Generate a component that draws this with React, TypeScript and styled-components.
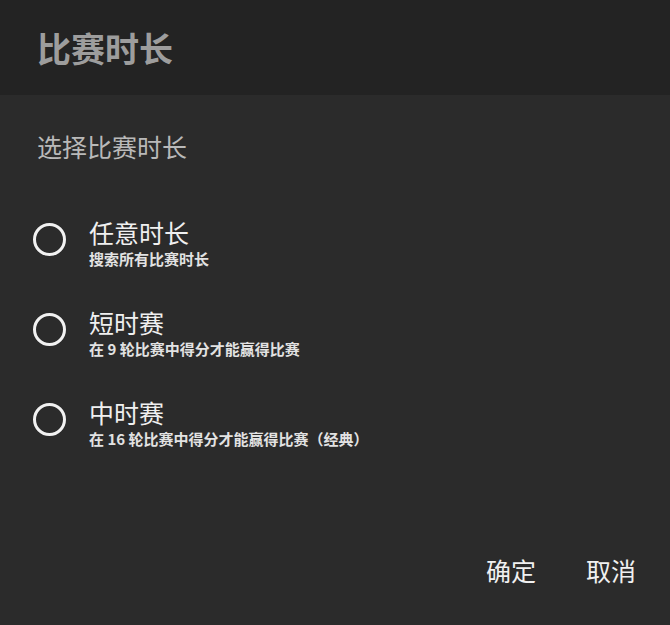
import React from "react";
import styled, { createGlobalStyle } from "styled-components";

const Global = createGlobalStyle`
  html, body { margin: 0; padding: 0; background: #2b2b2b; }
  body { font-family: "Noto Sans CJK SC", "Noto Sans", sans-serif; }
`;

const Dialog = styled.div`
  width: 670px;
  height: 625px;
  display: flex;
  flex-direction: column;
  background: #2b2b2b;
`;

const Header = styled.div`
  height: 95px;
  background: #232323;
  display: flex;
  align-items: center;
  padding-left: 37px;
`;

const Title = styled.h1`
  margin: 0;
  font-size: 34px;
  line-height: 34px;
  font-weight: 700;
  color: #9d9d9d;
`;

const Body = styled.div`
  display: flex;
  flex-direction: column;
  padding: 39px 0 0 37px;
`;

const Subtitle = styled.div`
  font-size: 25px;
  line-height: 25px;
  color: #b9b9b9;
`;

const List = styled.div`
  display: flex;
  flex-direction: column;
  gap: 40px;
  margin-top: 59px;
`;

const Row = styled.div`
  display: flex;
  align-items: flex-start;
  gap: 23px;
`;

const Radio = styled.div`
  width: 33px;
  height: 33px;
  box-sizing: border-box;
  border: 3px solid #f2f2f2;
  border-radius: 50%;
  margin-top: 5px;
  margin-left: -4px;
  flex: none;
`;

const Texts = styled.div`
  display: flex;
  flex-direction: column;
  gap: 4px;
`;

const OptionTitle = styled.div`
  font-size: 25px;
  line-height: 28px;
  color: #f0f0f0;
`;

const OptionSub = styled.div`
  font-size: 15px;
  line-height: 18px;
  font-weight: 700;
  color: #e2e2e2;
`;

const Actions = styled.div`
  display: flex;
  justify-content: flex-end;
  gap: 50px;
  padding-right: 34px;
  margin-top: 110px;
`;

const Action = styled.button`
  background: none;
  border: none;
  padding: 0;
  font-family: inherit;
  font-size: 25px;
  line-height: 25px;
  color: #f0f0f0;
  cursor: pointer;
`;

const options = [
  { title: "任意时长", sub: "搜索所有比赛时长" },
  { title: "短时赛", sub: "在 9 轮比赛中得分才能赢得比赛" },
  { title: "中时赛", sub: "在 16 轮比赛中得分才能赢得比赛（经典）" },
];

export default function App() {
  return (
    <>
      <Global />
      <Dialog>
        <Header>
          <Title>比赛时长</Title>
        </Header>
        <Body>
          <Subtitle>选择比赛时长</Subtitle>
          <List>
            {options.map((o) => (
              <Row key={o.title}>
                <Radio />
                <Texts>
                  <OptionTitle>{o.title}</OptionTitle>
                  <OptionSub>{o.sub}</OptionSub>
                </Texts>
              </Row>
            ))}
          </List>
        </Body>
        <Actions>
          <Action>确定</Action>
          <Action>取消</Action>
        </Actions>
      </Dialog>
    </>
  );
}
